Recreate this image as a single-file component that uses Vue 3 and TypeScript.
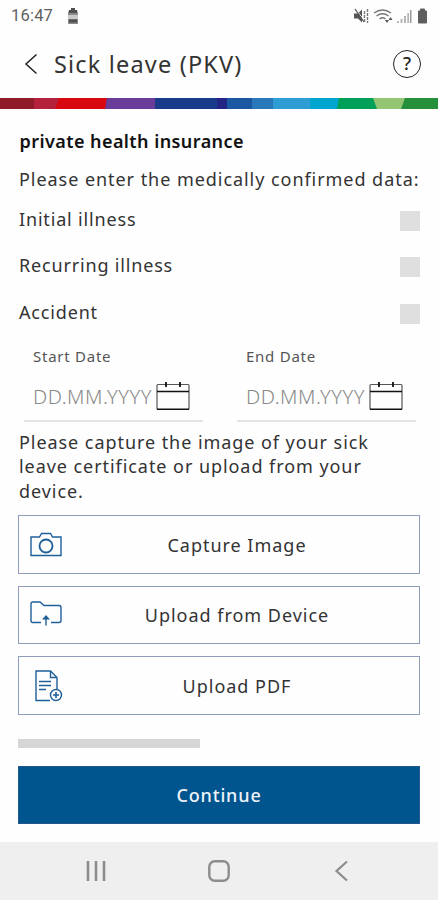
<script setup lang="ts">
import { ref } from 'vue'

interface Option {
  label: string
  checked: boolean
}

const options = ref<Option[]>([
  { label: 'Initial illness', checked: false },
  { label: 'Recurring illness', checked: false },
  { label: 'Accident', checked: false },
])

const dates: string[] = ['Start Date', 'End Date']

type IconName = 'camera' | 'folder' | 'pdf'
const actions: { label: string; icon: IconName }[] = [
  { label: 'Capture Image', icon: 'camera' },
  { label: 'Upload from Device', icon: 'folder' },
  { label: 'Upload PDF', icon: 'pdf' },
]
</script>

<template>
  <div class="screen">
    <div class="status">
      <span class="clock">16:47</span>
      <svg class="sim" width="12" height="18" viewBox="0 0 12 18">
        <path d="M4 1h4v2h2l1 3v11H1V6l1-3h2z" fill="#8b8b8b" />
        <path d="M1 8h10v4H1z" fill="#cacaca" />
        <path d="M4 1h4v2h2v3H2V3h2zM2 12.500h8v3H2z" fill="#4f4f4f" />
      </svg>
      <svg class="signals" width="78" height="18" viewBox="0 0 78 18">
        <path d="M1 6.500h4l4-4v13l-4-4H1z" fill="#555" />
        <path d="M3 2l9 13" stroke="#fefefe" stroke-width="1" />
        <path d="M2 2l9 13" stroke="#555" stroke-width="1.300" />
        <path d="M11.500 4v12M14.500 2v14" stroke="#777" stroke-width="1.400" stroke-dasharray="3 1" />
        <g fill="none" stroke="#777" stroke-width="1.300">
          <path d="M21 6q8.500-6 17 0M23.500 9q6-4.500 12 0M26.500 12q3-2.500 6 0" />
        </g>
        <path d="M32 13h4l-2 3zM35.500 13h4l-2-3z" fill="#555" />
        <g fill="#b5b5b5">
          <path d="M44 14h2v2h-2zM47.500 12h2v4h-2zM51 9h2v7h-2zM54.300 6h1.700v10h-1.700z" />
          <path d="M57 3h1.500v13H57z" fill="#999" />
        </g>
        <path d="M67.500 2h4v2h2v12h-8V4h2z" fill="#5e5e5e" stroke="#5e5e5e" stroke-linejoin="round" />
      </svg>
    </div>

    <header class="bar">
      <svg class="back" width="14" height="22" viewBox="0 0 14 22">
        <path d="M12.500 1.500 2 11l10.500 9.500" fill="none" stroke="#222" stroke-width="1.500" />
      </svg>
      <h1 class="title">Sick leave (PKV)</h1>
      <span class="help">?</span>
    </header>

    <svg class="stripe" width="438" height="11" viewBox="0 0 438 11" preserveAspectRatio="none">
      <path d="M0 0h438v11H0z" fill="#258f3a" />
      <path d="M0 0h405l-4 11H0z" fill="#94c572" />
      <path d="M0 0h373l4 11H0z" fill="#00a058" />
      <path d="M0 0h339l-2 11H0z" fill="#00a6cf" />
      <path d="M0 0h310v11H0z" fill="#2d9dd4" />
      <path d="M0 0h273v11H0z" fill="#2878ba" />
      <path d="M0 0h252v11H0z" fill="#1c58a1" />
      <path d="M0 0h227v11H0z" fill="#222585" />
      <path d="M0 0h217v11H0z" fill="#193b89" />
      <path d="M0 0h155v11H0z" fill="#6a3c99" />
      <path d="M0 0h107l-2 11H0z" fill="#d7080f" />
      <path d="M0 0h59l-4 11H0z" fill="#b3213c" />
      <path d="M0 0h34v11H0z" fill="#8f1b28" />
    </svg>

    <main class="content">
      <h2 class="heading">private health insurance</h2>
      <p class="lead">Please enter the medically confirmed data:</p>

      <label v-for="o in options" :key="o.label" class="option">
        <span>{{ o.label }}</span>
        <input v-model="o.checked" class="box" type="checkbox" />
      </label>

      <div class="dates">
        <div v-for="d in dates" :key="d" class="date">
          <span class="date-label">{{ d }}</span>
          <div class="date-row">
            <span class="placeholder">DD.MM.YYYY</span>
            <svg class="cal" width="34" height="30" viewBox="0 0 34 30">
              <rect x="1" y="3.500" width="32" height="25" rx="1" fill="none" stroke="#555" stroke-width="1.200" />
              <path d="M1 10.500h32M1 28.300h32" stroke="#111" stroke-width="1.500" />
              <path d="M10 1v5M24 1v5" stroke="#111" stroke-width="1.800" />
            </svg>
          </div>
        </div>
      </div>

      <p class="hint">Please capture the image of your sick<br />leave certificate or upload from your<br />device.</p>

      <div class="actions">
        <button v-for="a in actions" :key="a.label" class="action" type="button">
          <svg class="icon" width="34" height="34" viewBox="0 0 34 34" fill="none" stroke="#1f5f99" stroke-width="1.400">
            <g v-if="a.icon === 'camera'">
              <path d="M2 9h8.500l2-3.500h9l2 3.500H32V27.500H2z" />
              <circle cx="17" cy="18" r="6.500" stroke-width="1.800" />
            </g>
            <g v-else-if="a.icon === 'folder'">
              <path d="M12 23.500H4q-2 0-2-2V5q0-2 2-2h7l4 3.500h15q2 0 2 2v13q0 2-2 2h-8" />
              <path d="M17 26.500v-8" />
              <path d="m13 20.500 4-4.500 4 4.500z" fill="#1f5f99" stroke="none" />
            </g>
            <g v-else>
              <path d="M21 31.500H7V2h14.500L28 8.500V20" />
              <path d="M21.500 2v6.500H28" />
              <path d="M10 12.500h12M10 16.500h12M10 20.500h7" />
              <circle cx="27" cy="26" r="5.500" />
              <path d="M27 23v6M24 26h6" stroke-width="1.600" />
            </g>
          </svg>
          <span>{{ a.label }}</span>
        </button>
      </div>

      <div class="progress"></div>
      <button class="continue" type="button">Continue</button>
    </main>

    <nav class="nav">
      <svg width="22" height="22" viewBox="0 0 22 22">
        <path d="M3 1v20M11 1v20M19 1v20" stroke="#8c8c8c" stroke-width="2.600" />
      </svg>
      <svg width="22" height="22" viewBox="0 0 22 22">
        <rect x="1.300" y="1.300" width="19.400" height="19.400" rx="5.500" fill="none" stroke="#8c8c8c" stroke-width="2.400" />
      </svg>
      <svg width="22" height="22" viewBox="0 0 22 22">
        <path d="M16 1.500 5.500 11 16 20.500" fill="none" stroke="#8c8c8c" stroke-width="2.200" />
      </svg>
    </nav>
  </div>
</template>

<style>
body {
  margin: 0;
  background: #fff;
}
</style>

<style scoped>
.screen {
  box-sizing: border-box;
  width: 438px;
  height: 900px;
  display: flex;
  flex-direction: column;
  overflow: hidden;
  background: #fefefe;
  color: #333;
  font-family: "Noto Sans", "Liberation Sans", sans-serif;
  font-size: 18px;
}
.status {
  display: flex;
  align-items: center;
  height: 32px;
  flex: none;
  padding: 0 7px 0 11px;
}
.clock {
  font: 16.500px/32px Roboto, sans-serif;
  color: #606060;
  letter-spacing: 0.200px;
}
.sim {
  margin-left: 14px;
}
.signals {
  margin-left: auto;
}
.bar {
  display: flex;
  align-items: center;
  height: 66px;
  flex: none;
  box-sizing: border-box;
  padding: 0 17px 2px 24px;
}
.title {
  margin: 0 0 0 16px;
  font-size: 23.500px;
  line-height: 32px;
  font-weight: 400;
  letter-spacing: 1.180px;
  color: #333;
}
.help {
  box-sizing: border-box;
  width: 28px;
  height: 28px;
  margin-left: auto;
  border: 1.500px solid #222;
  border-radius: 50%;
  text-align: center;
  font-size: 18px;
  line-height: 25px;
  font-weight: 500;
  color: #222;
}
.stripe {
  display: block;
  flex: none;
}
.content {
  flex: 1;
  padding: 17px 18px 0;
}
.heading {
  margin: 0 0 0 1.500px;
  font-size: 18px;
  line-height: 30px;
  font-weight: 600;
  letter-spacing: 0.430px;
  color: #111;
}
.lead {
  margin: 8px 0 0 1px;
  line-height: 30px;
  letter-spacing: 0.950px;
  white-space: nowrap;
}
.option {
  display: flex;
  justify-content: space-between;
  align-items: center;
  height: 46.300px;
  padding-left: 1px;
  letter-spacing: 0.830px;
}
.option:first-of-type {
  margin-top: 2px;
}
.box {
  appearance: none;
  width: 20px;
  height: 20px;
  margin: 4px 0 0;
  background: #dfdfdf;
}
.dates {
  display: flex;
  gap: 34px;
  margin: 8px 4px 0 6px;
}
.date {
  width: 179px;
  height: 79px;
  box-sizing: border-box;
  border-bottom: 2px solid #e3e3e3;
  padding-left: 9px;
}
.date-label {
  display: block;
  font-size: 15px;
  line-height: 26px;
  letter-spacing: 0.750px;
  color: #555;
}
.date-row {
  display: flex;
  align-items: center;
  height: 56px;
}
.placeholder {
  width: 123px;
  font-size: 20px;
  font-weight: 300;
  letter-spacing: 0.500px;
  color: #888;
  white-space: nowrap;
}
.cal {
  flex: none;
  margin-top: -2px;
}
.hint {
  margin: 8px 0 0 1px;
  line-height: 24.500px;
  letter-spacing: 0.940px;
  white-space: nowrap;
}
.actions {
  display: flex;
  flex-direction: column;
  gap: 12px;
  margin-top: 12px;
}
.action {
  position: relative;
  display: flex;
  align-items: center;
  justify-content: center;
  box-sizing: border-box;
  width: 402px;
  height: 58.500px;
  padding: 0 0 0 36px;
  border: 1.500px solid #8d9dba;
  background: transparent;
  font: inherit;
  letter-spacing: 0.980px;
  color: #333;
}
.icon {
  position: absolute;
  left: 10px;
  top: 12px;
}
.progress {
  width: 182px;
  height: 9px;
  margin-top: 24px;
  background: #d6d6d6;
}
.continue {
  display: block;
  box-sizing: border-box;
  width: 402px;
  height: 58px;
  margin-top: 18px;
  padding: 0;
  border: 1px solid #24568f;
  background: #00558f;
  color: #eef3f9;
  font: 500 18px "Noto Sans", sans-serif;
  letter-spacing: 0.850px;
}
.nav {
  display: flex;
  align-items: center;
  justify-content: center;
  gap: 101px;
  height: 58px;
  flex: none;
  background: #efefef;
}
</style>
